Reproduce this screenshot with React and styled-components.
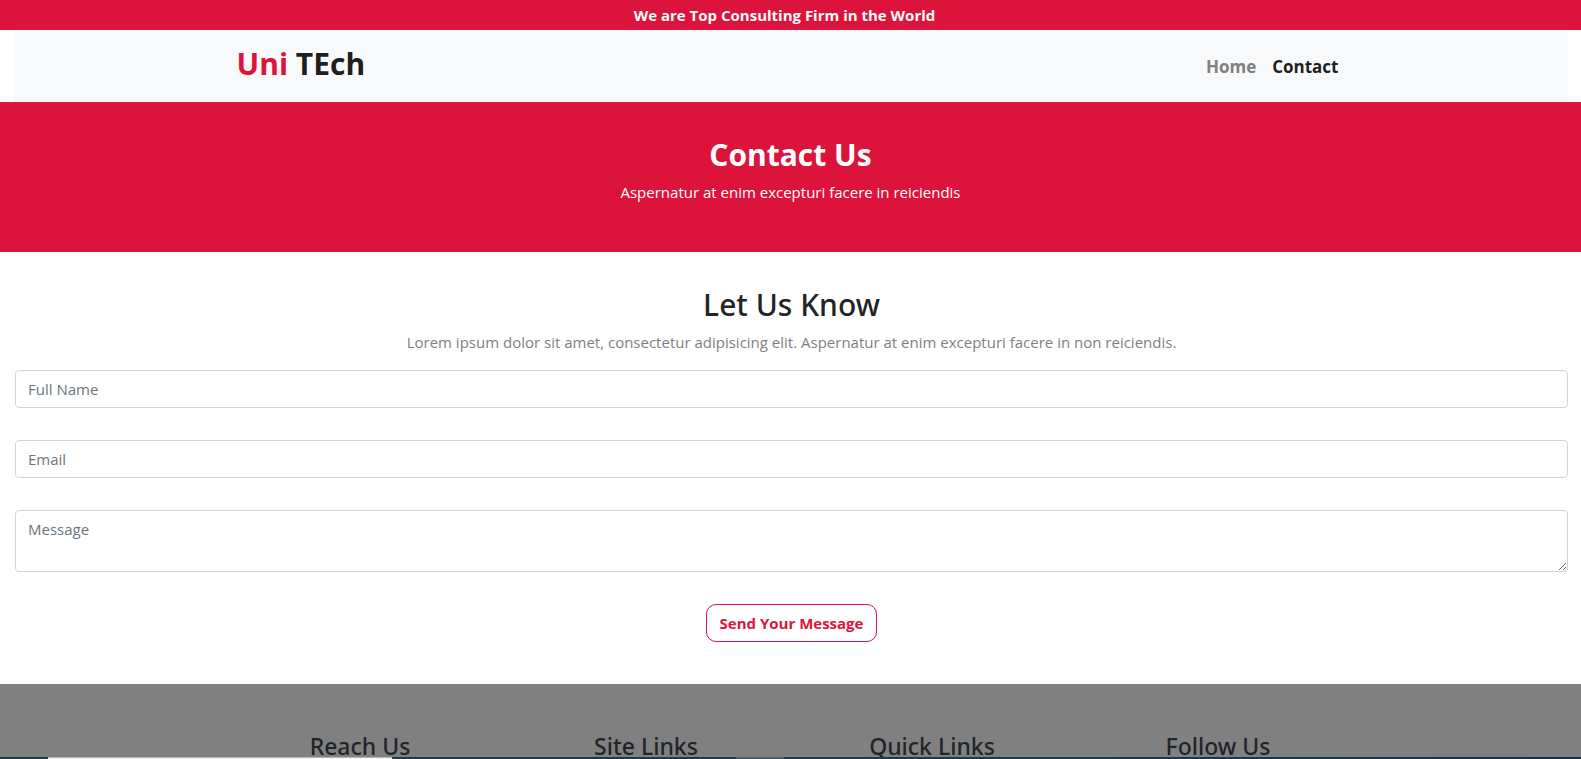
import React from "react";
import styled, { createGlobalStyle } from "styled-components";

const crimson = "#dc143c";
const ink = "#212529";
const headingFont = `"Segoe UI", "Noto Sans", "Open Sans", sans-serif`;

const GlobalStyle = createGlobalStyle`
  *, *::before, *::after { box-sizing: border-box; }
  body {
    margin: 0;
    background: #fff;
    color: ${ink};
    font-family: "Segoe UI", "Open Sans", "Noto Sans", sans-serif;
    font-size: 16px;
    line-height: 24px;
  }
`;

const Page = styled.div`
  display: flex;
  flex-direction: column;
  height: 100vh;
  overflow: hidden;
`;

const Announcement = styled.div`
  flex: none;
  padding: 3px 12px 3px 0;
  background: ${crimson};
  color: #f8f9fa;
  font-size: 15px;
  font-weight: 700;
  text-align: center;
`;

const Header = styled.header`
  flex: none;
  margin: 0 13px 0 15px;
  background: #f8f9fa;
`;

const Navbar = styled.nav`
  display: flex;
  align-items: center;
  justify-content: space-between;
  max-width: 1140px;
  height: 72px;
  margin: 0 auto;
  padding: 0 15px;
`;

const Brand = styled.a`
  padding-bottom: 4px;
  color: rgba(0, 0, 0, 0.9);
  font-size: 30px;
  font-weight: 700;
  line-height: 48px;
  text-decoration: none;
`;

const BrandAccent = styled.span`
  color: ${crimson};
`;

const NavLinks = styled.div`
  display: flex;
`;

const NavLink = styled.a`
  padding: 9px 8px 7px;
  color: ${(p) => (p.$active ? "rgba(0, 0, 0, 0.9)" : "gray")};
  font-size: 17px;
  font-weight: 700;
  text-decoration: none;
`;

const Hero = styled.section`
  flex: none;
  height: 150px;
  padding-top: 34px;
  background: ${crimson};
  color: #fff;
  text-align: center;
`;

const Title = styled.h1`
  margin: 0 0 6px;
  font-family: ${(p) => (p.$strong ? "inherit" : headingFont)};
  font-size: 30px;
  font-weight: ${(p) => (p.$strong ? 700 : 500)};
  line-height: 38px;
`;

const Text = styled.p`
  margin: 0 0 16px;
  color: ${(p) => (p.$muted ? "gray" : "inherit")};
  font-size: 15px;
`;

const ContactSection = styled.main`
  flex: none;
  padding: 34px 13px 42px 15px;
  text-align: center;
`;

const Form = styled.form`
  display: flex;
  flex-direction: column;
  align-items: center;
  gap: 32px;
`;

const Field = styled.input`
  display: block;
  width: 100%;
  height: ${(p) => (p.$tall ? "62px" : "38px")};
  padding: 6px 12px;
  border: 1px solid #ced4da;
  border-radius: 4px;
  background: #fff;
  color: #495057;
  font-family: inherit;
  font-size: 15px;
  line-height: 24px;
  &::placeholder { color: #6c757d; opacity: 1; }
`;

const SendButton = styled.button`
  height: 38px;
  padding: 0 13px;
  border: 1px solid ${crimson};
  border-radius: 10px;
  background: #fff;
  color: ${crimson};
  font-family: inherit;
  font-size: 15px;
  font-weight: 700;
  line-height: 24px;
`;

const Footer = styled.footer`
  flex: 1 0 auto;
  padding: 48px 3px 0 0;
  background: gray;
`;

const FooterColumns = styled.div`
  display: grid;
  grid-template-columns: repeat(4, 1fr);
  max-width: 1144px;
  margin: 0 auto;
  text-align: center;
`;

const FooterHeading = styled.h2`
  margin: 0;
  font-family: ${headingFont};
  font-size: 23px;
  font-weight: 500;
  line-height: 28px;
`;

const Taskbar = styled.div`
  position: fixed;
  right: 0;
  bottom: 0;
  left: 0;
  display: flex;
  height: 2px;
  padding-left: 48px;
  background: linear-gradient(90deg, #203b45, #1d3a49 70%, #1b2c4b);
`;

const TaskbarSearch = styled.div`
  width: 344px;
  border-top: 1px solid #b9b9b9;
  background: #f3f3f3;
`;

const TaskbarItem = styled.div`
  width: 48px;
  margin-left: 344px;
  background: #4c5f68;
`;

const footerHeadings = ["Reach Us", "Site Links", "Quick Links", "Follow Us"];

export default function App() {
  return (
    <Page>
      <GlobalStyle />
      <Announcement>We are Top Consulting Firm in the World</Announcement>
      <Header>
        <Navbar>
          <Brand href="#home">
            <BrandAccent>Uni</BrandAccent> TEch
          </Brand>
          <NavLinks>
            <NavLink href="#home">Home</NavLink>
            <NavLink href="#contact" $active aria-current="page">Contact</NavLink>
          </NavLinks>
        </Navbar>
      </Header>
      <Hero>
        <Title $strong>Contact Us</Title>
        <Text>Aspernatur at enim excepturi facere in reiciendis</Text>
      </Hero>
      <ContactSection>
        <Title as="h2">Let Us Know</Title>
        <Text $muted>
          Lorem ipsum dolor sit amet, consectetur adipisicing elit. Aspernatur at enim excepturi facere in non reiciendis.
        </Text>
        <Form onSubmit={(e) => e.preventDefault()}>
          <Field type="text" name="name" placeholder="Full Name" aria-label="Full Name" />
          <Field type="email" name="email" placeholder="Email" aria-label="Email" />
          <Field as="textarea" name="message" placeholder="Message" aria-label="Message" $tall />
          <SendButton type="submit">Send Your Message</SendButton>
        </Form>
      </ContactSection>
      <Footer>
        <FooterColumns>
          {footerHeadings.map((heading) => (
            <FooterHeading key={heading}>{heading}</FooterHeading>
          ))}
        </FooterColumns>
      </Footer>
      <Taskbar aria-hidden="true">
        <TaskbarSearch />
        <TaskbarItem />
      </Taskbar>
    </Page>
  );
}
